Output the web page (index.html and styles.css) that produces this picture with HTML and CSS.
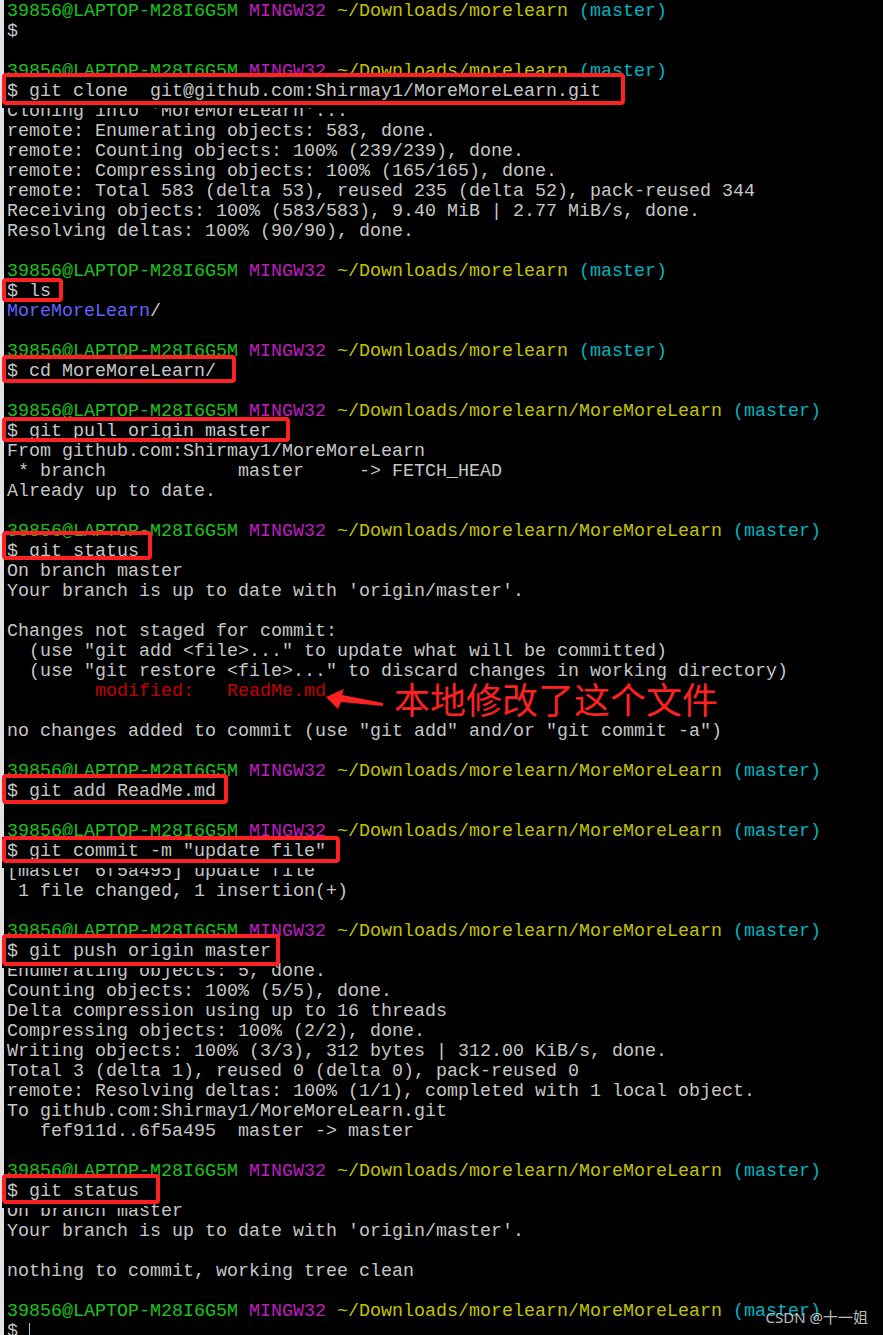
FILE: index.html
```html
<!DOCTYPE html>
<html lang="en">

<head>
	<meta charset="UTF-8">
	<meta name="viewport" content="width=device-width, initial-scale=1.0">
	<title>MINGW32 ~/Downloads/morelearn</title>
	<link rel="stylesheet" href="styles.css">
</head>

<body>
	<!--终端输出-->
	<pre class="term">
<span class="u">39856@LAPTOP-M28I6G5M</span> <span class="h">MINGW32</span> <span class="p">~/Downloads/morelearn</span> <span class="b">(master)</span>
$

<span class="u">39856@LAPTOP-M28I6G5M</span> <span class="h">MINGW32</span> <span class="p">~/Downloads/morelearn</span> <span class="b">(master)</span>
<span class="cmd cmd--cut cmd--clone">$ git clone  git@github.com:Shirmay1/MoreMoreLearn.git</span>
Cloning into 'MoreMoreLearn'...
remote: Enumerating objects: 583, done.
remote: Counting objects: 100% (239/239), done.
remote: Compressing objects: 100% (165/165), done.
remote: Total 583 (delta 53), reused 235 (delta 52), pack-reused 344
Receiving objects: 100% (583/583), 9.40 MiB | 2.77 MiB/s, done.
Resolving deltas: 100% (90/90), done.

<span class="u">39856@LAPTOP-M28I6G5M</span> <span class="h">MINGW32</span> <span class="p">~/Downloads/morelearn</span> <span class="b">(master)</span>
<span class="cmd cmd--ls">$ ls</span>
<span class="dir">MoreMoreLearn</span>/

<span class="u">39856@LAPTOP-M28I6G5M</span> <span class="h">MINGW32</span> <span class="p">~/Downloads/morelearn</span> <span class="b">(master)</span>
<span class="cmd cmd--cd">$ cd MoreMoreLearn/</span>

<span class="u">39856@LAPTOP-M28I6G5M</span> <span class="h">MINGW32</span> <span class="p">~/Downloads/morelearn/MoreMoreLearn</span> <span class="b">(master)</span>
<span class="cmd cmd--pull">$ git pull origin master</span>
From github.com:Shirmay1/MoreMoreLearn
 * branch            master     -> FETCH_HEAD
Already up to date.

<span class="u">39856@LAPTOP-M28I6G5M</span> <span class="h">MINGW32</span> <span class="p">~/Downloads/morelearn/MoreMoreLearn</span> <span class="b">(master)</span>
<span class="cmd cmd--status">$ git status</span>
On branch master
Your branch is up to date with 'origin/master'.

Changes not staged for commit:
  (use "git add &lt;file&gt;..." to update what will be committed)
  (use "git restore &lt;file&gt;..." to discard changes in working directory)
        <span class="mod">modified:   ReadMe.md</span>

no changes added to commit (use "git add" and/or "git commit -a")

<span class="u">39856@LAPTOP-M28I6G5M</span> <span class="h">MINGW32</span> <span class="p">~/Downloads/morelearn/MoreMoreLearn</span> <span class="b">(master)</span>
<span class="cmd cmd--add">$ git add ReadMe.md</span>

<span class="u">39856@LAPTOP-M28I6G5M</span> <span class="h">MINGW32</span> <span class="p">~/Downloads/morelearn/MoreMoreLearn</span> <span class="b">(master)</span>
<span class="cmd cmd--cut cmd--commit">$ git commit -m "update file"</span>
[master 6f5a495] update file
 1 file changed, 1 insertion(+)

<span class="u">39856@LAPTOP-M28I6G5M</span> <span class="h">MINGW32</span> <span class="p">~/Downloads/morelearn/MoreMoreLearn</span> <span class="b">(master)</span>
<span class="cmd cmd--cut cmd--push">$ git push origin master</span>
Enumerating objects: 5, done.
Counting objects: 100% (5/5), done.
Delta compression using up to 16 threads
Compressing objects: 100% (2/2), done.
Writing objects: 100% (3/3), 312 bytes | 312.00 KiB/s, done.
Total 3 (delta 1), reused 0 (delta 0), pack-reused 0
remote: Resolving deltas: 100% (1/1), completed with 1 local object.
To github.com:Shirmay1/MoreMoreLearn.git
   fef911d..6f5a495  master -> master

<span class="u">39856@LAPTOP-M28I6G5M</span> <span class="h">MINGW32</span> <span class="p">~/Downloads/morelearn/MoreMoreLearn</span> <span class="b">(master)</span>
<span class="cmd cmd--cut cmd--status2">$ git status</span>
On branch master
Your branch is up to date with 'origin/master'.

nothing to commit, working tree clean

<span class="u">39856@LAPTOP-M28I6G5M</span> <span class="h">MINGW32</span> <span class="p">~/Downloads/morelearn/MoreMoreLearn</span> <span class="b">(master)</span>
$ <span class="cursor"></span><svg class="arrow" width="70" height="30" viewBox="0 0 70 30"><polygon points="6,13 24,5 22,11 63,19 63,22 21,18 18,25"/></svg><span class="note">本地修改了这个文件</span></pre>
	<div class="mark">CSDN @十一姐</div>
</body>

</html>
```
FILE: styles.css
```css
* {
	margin: 0;
	padding: 0;
}

html,
body {
	height: 100%;
	overflow: hidden;
}

body {
	background: #000;
	box-shadow: inset 4px 0 #e2e2e2;
	position: relative;
}

.term {
	position: relative;
	padding: 2px 0 0 7px;
	font-family: "Liberation Mono", "DejaVu Sans Mono", monospace;
	font-size: 18.33px;
	line-height: 20px;
	color: #c6c6c6;
	white-space: pre;
}

/* 提示符颜色 */
.u {
	color: #1cc21c;
}

.h {
	color: #c01cc0;
}

.p {
	color: #c2c200;
}

.b {
	color: #00b4c2;
}

.dir {
	color: #6262ff;
}

.mod {
	color: #c40000;
}

/* 红框标注（手画的框，每个大小不一） */
.cmd {
	position: relative;
	z-index: 1;
}

.cmd::after {
	content: '';
	position: absolute;
	left: -5px;
	border: 4px solid #ff2121;
	border-radius: 4px;
}

/* 截图时压住了下一行的上半部分 */
.cmd--cut {
	box-shadow: 0 1px 0 5px #000;
}

.cmd--clone::after {
	top: -8px;
	bottom: -3px;
	right: -24px;
}

.cmd--ls::after {
	top: -3px;
	bottom: 0;
	right: -12px;
}

.cmd--cd::after {
	top: -6px;
	bottom: -1px;
	right: -20px;
}

.cmd--pull::after {
	top: -4px;
	bottom: 0;
	right: -19px;
}

.cmd--status::after {
	top: -10px;
	bottom: 2px;
	right: -13px;
}

.cmd--add::after {
	top: -7px;
	bottom: -2px;
	right: -12px;
}

.cmd--commit::after {
	top: -5px;
	bottom: -1px;
	right: -14px;
}

.cmd--push::after {
	top: -7px;
	bottom: -4px;
	right: -9px;
}

.cmd--status2::after {
	top: -7px;
	bottom: -2px;
	right: -21px;
}

.cursor {
	display: inline-block;
	width: 1px;
	height: 15px;
	background: #c0c0c0;
	vertical-align: -2px;
}

.arrow {
	position: absolute;
	left: 320px;
	top: 684px;
	fill: #ff2121;
}

.note {
	position: absolute;
	left: 394px;
	top: 680px;
	font-family: "Noto Sans CJK SC", sans-serif;
	font-size: 36px;
	line-height: 36px;
	color: #ff2121;
}

.mark {
	position: absolute;
	right: 15px;
	bottom: 8px;
	font-family: "Noto Sans", "Noto Sans CJK SC", sans-serif;
	font-size: 15px;
	line-height: 20px;
	color: rgba(235, 235, 235, 0.8);
	text-shadow: 0 0 2px rgba(0, 0, 0, 0.6);
}
```
